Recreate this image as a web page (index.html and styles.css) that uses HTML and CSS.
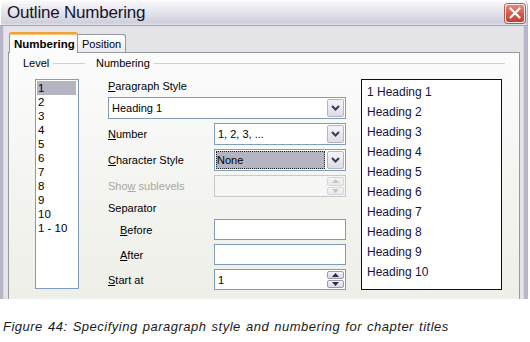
FILE: index.html
```html
<!DOCTYPE html>
<html>
<head>
<meta charset="utf-8">
<link rel="stylesheet" href="styles.css">
</head>
<body>
<div class="window">
  <div class="titlebar">
    <span class="title">Outline Numbering</span>
    <span class="close"><svg width="12" height="12" viewBox="0 0 12 12"><path d="M1.5 1.5 L10.5 10.5 M10.5 1.5 L1.5 10.5" stroke="#fff" stroke-width="2.2" stroke-linecap="round"/></svg></span>
  </div>
  <div class="frame">
    <div class="tabs">
      <div class="tab active">Numbering</div>
      <div class="tab">Position</div>
    </div>
    <div class="panel">
      <div class="level-col">
        <div class="group-head"><span>Level</span><i class="rule"></i></div>
        <ul class="list">
          <li class="sel">1</li><li>2</li><li>3</li><li>4</li><li>5</li><li>6</li><li>7</li><li>8</li><li>9</li><li>10</li><li>1 - 10</li>
        </ul>
      </div>
      <div class="num-col">
        <div class="group-head"><span>Numbering</span><i class="rule"></i></div>
        <div class="num-row">
          <div class="form">
            <div class="lbl span"><span><u>P</u>aragraph Style</span></div>
            <div class="select span"><span class="val">Heading 1</span><span class="btn"><svg width="9" height="6" viewBox="0 0 9 6"><path d="M1 1 L4.5 4.5 L8 1" fill="none" stroke="#3c3c50" stroke-width="2"/></svg></span></div>
            <div class="lbl"><span><u>N</u>umber</span></div>
            <div class="select"><span class="val">1, 2, 3, ...</span><span class="btn"><svg width="9" height="6" viewBox="0 0 9 6"><path d="M1 1 L4.5 4.5 L8 1" fill="none" stroke="#3c3c50" stroke-width="2"/></svg></span></div>
            <div class="lbl"><span><u>C</u>haracter Style</span></div>
            <div class="select"><span class="val focus">None</span><span class="btn"><svg width="9" height="6" viewBox="0 0 9 6"><path d="M1 1 L4.5 4.5 L8 1" fill="none" stroke="#3c3c50" stroke-width="2"/></svg></span></div>
            <div class="lbl dis"><span>Sho<u>w</u> sublevels</span></div>
            <div class="spin disabled"><span class="val"></span><span class="spinbtns"><span class="sb"><svg width="7" height="4" viewBox="0 0 7 4"><path d="M0 4 L3.5 0 L7 4Z" fill="#c4c4cc"/></svg></span><span class="sb"><svg width="7" height="4" viewBox="0 0 7 4"><path d="M0 0 L3.5 4 L7 0Z" fill="#c4c4cc"/></svg></span></span></div>
            <div class="lbl span"><span>Separator</span></div>
            <div class="lbl indent"><span><u>B</u>efore</span></div>
            <div class="input"></div>
            <div class="lbl indent"><span><u>A</u>fter</span></div>
            <div class="input"></div>
            <div class="lbl"><span><u>S</u>tart at</span></div>
            <div class="spin"><span class="val">1</span><span class="spinbtns"><span class="sb"><svg width="7" height="4" viewBox="0 0 7 4"><path d="M0 4 L3.5 0 L7 4Z" fill="#2c2c3c"/></svg></span><span class="sb"><svg width="7" height="4" viewBox="0 0 7 4"><path d="M0 0 L3.5 4 L7 0Z" fill="#2c2c3c"/></svg></span></span></div>
          </div>
          <div class="preview">
            <div>1 Heading 1</div>
            <div>Heading 2</div>
            <div>Heading 3</div>
            <div>Heading 4</div>
            <div>Heading 5</div>
            <div>Heading 6</div>
            <div>Heading 7</div>
            <div>Heading 8</div>
            <div>Heading 9</div>
            <div>Heading 10</div>
          </div>
        </div>
      </div>
    </div>
  </div>
</div>
<p class="caption">Figure 44: Specifying paragraph style and numbering for chapter titles</p>
</body>
</html>
```

FILE: styles.css
```css
* { box-sizing: border-box; }
html, body { margin: 0; padding: 0; background: #fff; }
body { width: 530px; height: 342px; overflow: hidden; font-family: "Liberation Sans", Arial, sans-serif; font-size: 11px; color: #000; }

.window { width: 528px; height: 299px; display: flex; flex-direction: column; overflow: hidden; }

.titlebar {
  height: 26px; flex: none;
  display: flex; align-items: center; justify-content: space-between;
  padding: 0 3px 0 7px;
  background: linear-gradient(#fbfbfd 0%, #ececf2 30%, #d8d8e4 75%, #cfcfdc 92%, #e6e6ee 100%);
  border-bottom: 1px solid #a4a4b8;
  border-radius: 6px 6px 0 0;
  box-shadow: inset 1px 1px 0 #ffffff, inset -1px 0 0 #b0b0c4;
}
.title { font-size: 17px; color: #14142a; letter-spacing: -0.2px; }
.close {
  width: 20px; height: 19px; margin-top: 1px;
  display: flex; align-items: center; justify-content: center;
  background: linear-gradient(#e8887a, #d4584a 55%, #c2412f);
  border: 1px solid #fdf0ee; border-radius: 3px;
  box-shadow: 0 0 0 1px #b05a58;
}

.frame {
  flex: 1; display: flex; flex-direction: column;
  background: #e4e3e8;
  border-left: 3px solid #b6b6c8;
  border-right: 4px solid #b6b6c8;
  box-shadow: inset 1px 0 0 #d8d8e4, inset -1px 0 0 #d8d8e4;
  padding: 6px 4px 0 5px;
}

.tabs { height: 20px; display: flex; align-items: flex-end; padding-left: 1px; position: relative; z-index: 1; flex: none; }
.tab {
  height: 18px; padding: 0 6px 0 4px;
  display: flex; align-items: center;
  border: 1px solid #919b9c; border-bottom: none; border-left: none;
  background: linear-gradient(#ffffff, #ececf0);
  border-radius: 0 3px 0 0;
  font-size: 11px;
}
.tab.active {
  height: 21px; margin-bottom: -1px; width: 69px;
  padding: 0 3px 0 4px;
  border-left: 1px solid #919b9c;
  border-top: 2px solid #f0a23a;
  border-radius: 3px 3px 0 0;
  background: #fcfcfe;
  font-weight: bold; font-size: 11.5px; color: #000;
  box-shadow: inset 0 1px 0 #f9c874;
}
.tabs .tab:not(.active) { width: 48px; }

.panel {
  flex: 1; display: flex; gap: 11px;
  padding: 3px 0 0 14px;
  border: 1px solid #919b9c; border-bottom: none;
  background: linear-gradient(#fcfcfd, #f3f3ef 60%, #efefea);
}

.group-head { height: 14px; display: flex; align-items: center; color: #000; }
.group-head .rule { flex: 1; height: 1px; background: #d2d2ca; margin-left: 4px; }
.level-col { width: 62px; flex: none; }
.num-col { width: 409px; flex: none; }

.list {
  list-style: none; margin: 9px 0 0 12px; padding: 1px;
  width: 44px; height: 210px;
  background: #fff; border: 1px solid #7f9db9;
}
.list li { height: 14px; line-height: 14px; padding-left: 1px; font-size: 11.5px; margin-right: 1px; }
.list li.sel { background: #b4b4c2; }

.num-row { display: flex; gap: 15px; margin-top: 9px; }
.form {
  margin-left: 12px; width: 238px; flex: none;
  display: grid; grid-template-columns: 106px 132px;
  grid-template-rows: 14px 22px 22px 22px 22px 14px 21px 21px 21px;
  row-gap: 4px;
}
.span { grid-column: 1 / 3; }
.lbl { display: flex; align-items: center; }
.lbl.indent { padding-left: 12px; }
.lbl.dis { color: #a8a7a2; }
u { text-decoration-thickness: 1px; text-underline-offset: 1px; }

.select, .spin, .input {
  display: flex; align-items: stretch;
  background: #fff; border: 1px solid #7f9db9;
}
.select .val, .spin .val { flex: 1; display: flex; align-items: center; padding-left: 3px; font-size: 11px; }
.select .val.focus { margin: 1px; padding-left: 1px; background: #b4b4c2; outline: 1px dotted #202020; outline-offset: -1px; }
.btn {
  width: 17px; margin: 1px; flex: none;
  display: flex; align-items: center; justify-content: center;
  background: linear-gradient(#f4f4f8, #dcdce6);
  border: 1px solid #b4b4c6; border-radius: 2px;
}
.spinbtns { width: 17px; margin: 1px; flex: none; display: flex; flex-direction: column; gap: 1px; }
.sb {
  flex: 1; display: flex; align-items: center; justify-content: center;
  background: linear-gradient(#f4f4f8, #d8d8e2);
  border: 1px solid #9a9aae; border-radius: 2px;
}
.spin.disabled { border-color: #c8c8cc; background: #f6f6f4; }
.spin.disabled .sb { border-color: #d6d6dc; background: linear-gradient(#f4f4f4, #e8e8ea); }

.preview {
  width: 141px; height: 211px; flex: none;
  background: #fff; border: 1px solid #111;
  padding: 2px 0 0 5px;
  font-size: 12px; color: #16123a;
}
.preview div { height: 20px; line-height: 20px; }

.caption {
  margin: 0; padding: 21px 0 0 3px;
  font-style: italic; font-size: 13px; line-height: 14px;
  letter-spacing: 0.5px; word-spacing: 1px;
  color: #1a1a1a;
}
```
